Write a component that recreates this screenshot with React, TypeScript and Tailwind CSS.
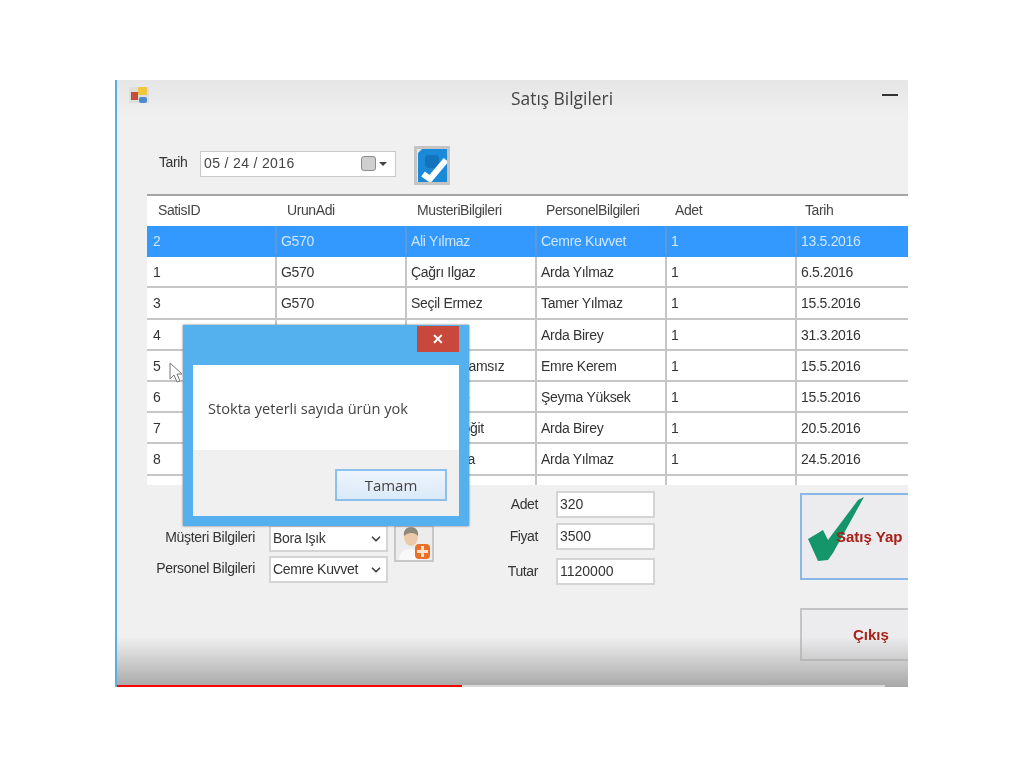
import { ChevronDown } from 'lucide-react';

const rows = [
    ['2', 'G570', 'Ali Yılmaz', 'Cemre Kuvvet', '1', '13.5.2016'],
    ['1', 'G570', 'Çağrı Ilgaz', 'Arda Yılmaz', '1', '6.5.2016'],
    ['3', 'G570', 'Seçil Ermez', 'Tamer Yılmaz', '1', '15.5.2016'],
    ['4', '', '', 'Arda Birey', '1', '31.3.2016'],
    ['5', '', 'Nurcan Gamsız', 'Emre Kerem', '1', '15.5.2016'],
    ['6', '', 'Ali Tombo', 'Şeyma Yüksek', '1', '15.5.2016'],
    ['7', '', 'Ahmet Soğit', 'Arda Birey', '1', '20.5.2016'],
    ['8', '', 'Selin Kaya', 'Arda Yılmaz', '1', '24.5.2016'],
    ['', '', '', '', '', ''],
];

const headers = [
    { label: 'SatisID', indent: 'pl-[11px]' },
    { label: 'UrunAdi', indent: 'pl-[10px]' },
    { label: 'MusteriBilgileri', indent: 'pl-[10px]' },
    { label: 'PersonelBilgileri', indent: 'pl-[9px]' },
    { label: 'Adet', indent: 'pl-[8px]' },
    { label: 'Tarih', indent: 'pl-[8px]' },
];

function AppIcon() {
    return (
        <svg width="20" height="18" viewBox="0 0 20 18" className="mb-[8px]">
            <rect x="0" y="1" width="20" height="16" fill="#dedede" />
            <rect x="9" y="1" width="9" height="8" rx="1" fill="#f0c63a" />
            <rect x="2" y="6" width="7" height="8" fill="#c4503a" />
            <rect x="10" y="11" width="8" height="6" rx="2" fill="#4f8ad0" />
        </svg>
    );
}

function Combo({ value }: { value: string }) {
    return (
        <div className="w-[119px] h-[27px] bg-white border-2 border-[#d4d4d6] flex items-center justify-between pl-[2px] pr-[3px] text-[14px] text-[#333]">
            <span className="tracking-[-0.3px] whitespace-nowrap">{value}</span>
            <ChevronDown size={14} strokeWidth={3} className="text-[#444]" />
        </div>
    );
}

function NumberField({ label, value }: { label: string; value: string }) {
    return (
        <div className="flex items-center justify-end gap-[18px]">
            <span className="text-[14px] text-[#333] tracking-[-0.4px]">{label}</span>
            <div className="w-[99px] h-[27px] bg-white border-2 border-[#d4d4d6] flex items-center pl-[2px] text-[14px] text-[#333]">{value}</div>
        </div>
    );
}

export default function App() {
    return (
        <div className="min-h-[767px] bg-white pt-[80px] pl-[115px] font-['Liberation_Sans',sans-serif]">
            <div className="relative w-[793px] h-[607px] overflow-hidden bg-[#f0f0f1] border-l-2 border-[#5aaee8] blur-[0.6px]">
                {/* title bar */}
                <div className="h-[38px] flex items-center justify-between bg-gradient-to-b from-[#e6e6e6] to-[#f0f0f0] pl-[12px] pr-[10px]">
                    <AppIcon />
                    <span className="font-['Open_Sans',sans-serif] text-[17.4px] text-[#444] ml-[362px] mb-[2px]">Satış Bilgileri</span>
                    <span className="w-[16px] h-[2px] bg-[#333] ml-auto mb-[8px]" />
                </div>

                {/* date row */}
                <div className="flex items-center h-[39px] mt-[28px] ml-[42px]">
                    <span className="text-[14px] text-[#333] tracking-[-0.4px] w-[41px] mb-[7px]">Tarih</span>
                    <div className="w-[196px] h-[26px] mb-[4px] bg-white border border-[#c8c8c8] flex items-center justify-between pl-[3px] pr-[8px] text-[14px] tracking-[0.35px] text-[#444]">
                        <span className="mb-[1px]">05 / 24 / 2016</span>
                        <span className="flex items-center gap-[3px]">
                            <span className="w-[15px] h-[15px] rounded-[3px] bg-[#cfcfcf] border border-[#8c8c8c]" />
                            <span className="w-0 h-0 border-x-[4px] border-x-transparent border-t-[4px] border-t-[#444]" />
                        </span>
                    </div>
                    <div className="w-[36px] h-[39px] ml-[18px] border-[3px] border-[#c4c4c4] bg-[#e8e8e8] flex items-center justify-center">
                        <svg width="29" height="33" viewBox="0 0 29 33">
                            <path d="M4 0h25v33H0V4z" fill="#1a8ad8" />
                            <rect x="7" y="6" width="14" height="13" rx="4" fill="#1274bd" />
                            <path d="M5 25l7 5L28 11" fill="none" stroke="#fff" strokeWidth="6" />
                        </svg>
                    </div>
                </div>

                {/* grid */}
                <div className="mt-[9px] ml-[30px] w-[780px] h-[291px] overflow-hidden bg-[#f0f0f1] border-t-2 border-[#a5a5a5] text-[14px] text-[#333]">
                    <div className="flex h-[30px] bg-white items-center text-[#444] tracking-[-0.4px] pb-[1px]">
                        {headers.map((h) => (
                            <div key={h.label} className={`w-[130px] ${h.indent}`}>{h.label}</div>
                        ))}
                    </div>
                    {rows.map((row, i) => (
                        <div
                            key={i}
                            className={`flex h-[31.2px] items-center border-b-2 ${i === 0 ? 'bg-[#3399ff] text-[#cfe6ff] border-[#3399ff]' : 'bg-white border-[#c6c6c6]'}`}
                        >
                            {row.map((cell, j) => (
                                <div
                                    key={j}
                                    className={`w-[130px] h-full flex items-center pt-[2px] whitespace-nowrap tracking-[-0.3px] border-r-2 ${j === 0 ? 'pl-[6px]' : 'pl-[4px]'} ${i === 0 ? 'border-[#5a9ad8]' : 'border-[#c6c6c6]'}`}
                                >
                                    {cell}
                                </div>
                            ))}
                        </div>
                    ))}
                </div>

                {/* bottom form */}
                <div className="flex mt-[6px]">
                    <div className="w-[384px] shrink-0 pl-[40px] pt-[34px] flex items-start">
                        <div className="flex flex-col gap-[4px] items-end w-[231px] shrink-0">
                            <div className="flex items-center gap-[14px]">
                                <span className="text-[14px] text-[#333] tracking-[-0.3px] mb-[2px] whitespace-nowrap">Müşteri Bilgileri</span>
                                <Combo value="Bora Işık" />
                            </div>
                            <div className="flex items-center gap-[14px]">
                                <span className="text-[14px] text-[#333] tracking-[-0.3px] mb-[3px] whitespace-nowrap">Personel Bilgileri</span>
                                <Combo value="Cemre Kuvvet" />
                            </div>
                        </div>
                        <div className="w-[40px] h-[37px] ml-[6px] shrink-0 border-2 border-[#c8c8c8] bg-[#ececec] flex items-center justify-center">
                            <svg width="36" height="33" viewBox="0 0 36 33">
                                <path d="M3 33c0-8 5-11 12-11s12 3 12 11z" fill="#f8f8f8" />
                                <ellipse cx="15" cy="10" rx="7" ry="9" fill="#ecc9a8" />
                                <path d="M8 9C7 3 11 0 15 0s8 3 7 9c-3-4-10-4-14 0z" fill="#8f8a78" />
                                <rect x="19" y="17" width="15" height="15" rx="4" fill="#e8702a" />
                                <path d="M26.500 19v11M21 24.500h11" stroke="#fbe3cc" strokeWidth="3" />
                            </svg>
                        </div>
                    </div>
                    <div className="w-[154px] shrink-0 flex flex-col gap-[5px]">
                        <NumberField label="Adet" value="320" />
                        <NumberField label="Fiyat" value="3500" />
                        <div className="mt-[3px]">
                            <NumberField label="Tutar" value="1120000" />
                        </div>
                    </div>
                    <div className="ml-[145px] shrink-0 flex flex-col gap-[28px] pt-[2px]">
                        <div className="relative w-[130px] h-[87px] border-2 border-[#8ab8e6] bg-[#ececee] flex items-center pl-[34px] pt-[1px] font-bold text-[15px] text-[#a82018]">
                            <svg className="absolute left-0 top-0" width="66" height="70" viewBox="0 0 66 70">
                                <path d="M6 44l15-9 5 10L56 5l6-3-31 56-5 7-10 1z" fill="#14966a" />
                            </svg>
                            <span className="relative whitespace-nowrap">Satış Yap</span>
                        </div>
                        <div className="w-[130px] h-[53px] border-2 border-[#c4c4c4] bg-[#ececee] flex items-center pl-[51px] pt-[2px] font-bold text-[15px] text-[#a82018]">
                            Çıkış
                        </div>
                    </div>
                </div>

                {/* bottom shade and player bar */}
                <div className="absolute inset-x-0 bottom-0 h-[50px] bg-gradient-to-b from-transparent to-[#a8a8a8] pointer-events-none" />
                <div className="absolute left-0 bottom-0 flex w-full h-[2px]">
                    <div className="w-[345px] bg-[#ff0000]" />
                    <div className="w-[423px] bg-[#d8d8d8]" />
                </div>

                {/* message box */}
                <div className="absolute left-[66px] top-[245px] w-[286px] h-[201px] bg-[#55b0ee] flex flex-col px-[10px] pb-[10px] shadow-[0_0_2px_#666]">
                    <div className="h-[40px] flex justify-end items-start shrink-0">
                        <div className="w-[42px] h-[26px] mt-[1px] bg-[#c9483c] flex items-center justify-center text-white text-[14px] font-bold">✕</div>
                    </div>
                    <div className="h-[85px] shrink-0 bg-white pl-[15px] pt-[33px] text-[14.6px] text-[#444] font-['Open_Sans',sans-serif]">Stokta yeterli sayıda ürün yok</div>
                    <div className="flex-1 bg-[#f0f0f0] flex justify-end items-start pt-[19px] pr-[12px]">
                        <div className="w-[112px] h-[32px] border-2 border-[#8cc0ec] bg-gradient-to-b from-[#eef5fc] to-[#dbe9f8] flex items-center justify-center text-[15px] text-[#444] font-['Open_Sans',sans-serif]">Tamam</div>
                    </div>
                </div>

                {/* mouse cursor */}
                <svg className="absolute left-[52px] top-[282px]" width="15" height="21" viewBox="0 0 15 21">
                    <path d="M1 1v16l4-4 3 7 3-1-3-7h5z" fill="#fff" stroke="#777" strokeWidth="1" />
                </svg>
            </div>
        </div>
    );
}
